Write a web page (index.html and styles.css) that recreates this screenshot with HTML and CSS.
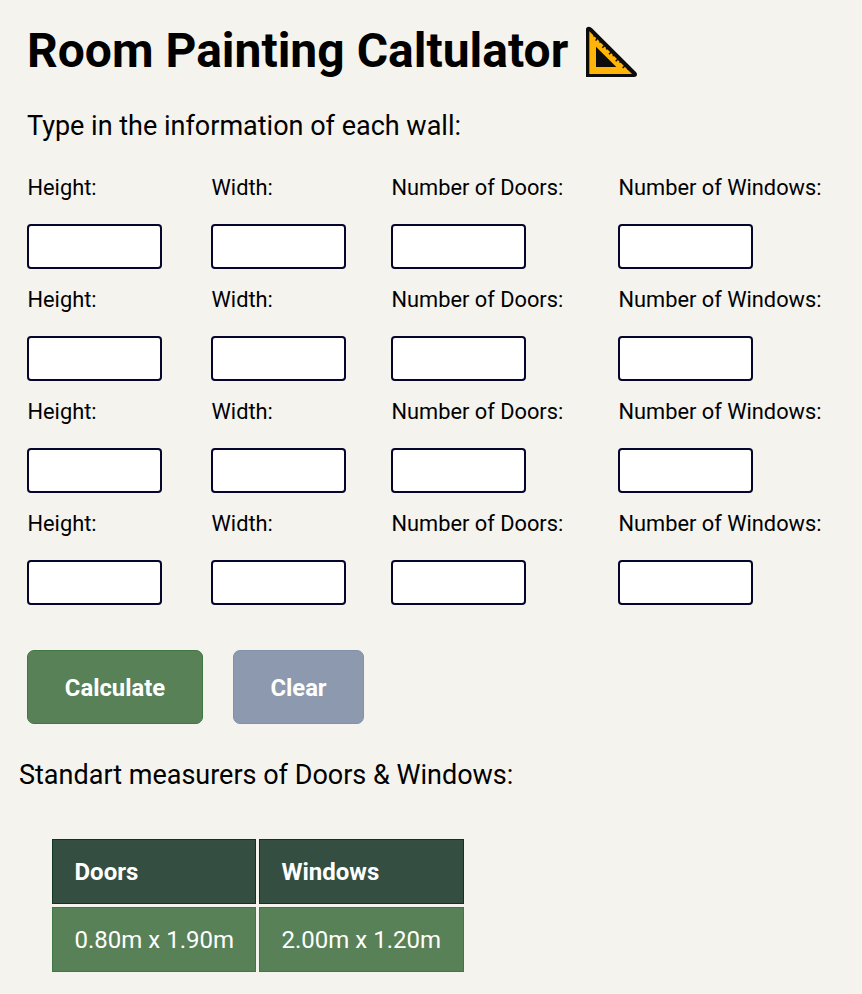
FILE: index.html
```html
<!DOCTYPE html>
<html lang="en">
<head>
<meta charset="utf-8">
<title>Room Painting Caltulator</title>
<link rel="stylesheet" href="styles.css">
</head>
<body>
<h1>Room Painting Caltulator
<svg class="ruler" viewBox="48 33 153 153" aria-hidden="true"><path d="M48 186V43Q48 35 57 35Q62 35 66 40L197 170Q201 174 201 178Q201 186 192 186Z" fill="#0c0c0c"/><path d="M58 49V177H186Z" fill="#ffb407"/><path d="M78 95V156H139Z" fill="#0c0c0c"/><path d="M76 62L70 63M83 68L77 77M94 80L88 82M105 90L97 98M114 100L108 102M125 110L117 118M134 120L128 122M145 131L137 139M154 140L148 142M166 151L158 159M176 161L171 162" fill="none" stroke="#0c0c0c" stroke-width="4.500"/></svg></h1>
<p class="intro">Type in the information of each wall:</p>
<form>
<div class="walls">
<label>Height:<input type="text"></label><label>Width:<input type="text"></label><label>Number of Doors:<input type="text"></label><label>Number of Windows:<input type="text"></label>
<label>Height:<input type="text"></label><label>Width:<input type="text"></label><label>Number of Doors:<input type="text"></label><label>Number of Windows:<input type="text"></label>
<label>Height:<input type="text"></label><label>Width:<input type="text"></label><label>Number of Doors:<input type="text"></label><label>Number of Windows:<input type="text"></label>
<label>Height:<input type="text"></label><label>Width:<input type="text"></label><label>Number of Doors:<input type="text"></label><label>Number of Windows:<input type="text"></label>
</div>
<div class="actions"><button type="button" class="calculate">Calculate</button><button type="button" class="clear">Clear</button></div>
</form>
<p class="standard">Standart measurers of Doors &amp; Windows:</p>
<table>
<colgroup><col class="doors"><col></colgroup>
<tr><th>Doors</th><th>Windows</th></tr>
<tr><td>0.80m x 1.90m</td><td>2.00m x 1.20m</td></tr>
</table>
</body>
</html>
```
FILE: styles.css
```css
* { box-sizing: border-box; }
body { margin: 0; padding: 21px 0 0 27px; height: 994px; overflow: hidden; background: #f5f3ee; color: #000; font-family: Roboto, sans-serif; }
h1 { display: flex; align-items: center; gap: 18px; margin: 0; height: 60px; font-size: 48px; line-height: 60px; font-weight: 700; white-space: nowrap; }
.ruler { width: 51px; height: 51px; margin-top: 1px; }
p { margin: 0; font-size: 27px; line-height: 36px; white-space: nowrap; }
.intro { margin-top: 27px; }
.walls { display: grid; grid-template-columns: 184px 180px 227px 227px; grid-auto-rows: 112px; margin-top: 29px; }
label { font-size: 21.8px; line-height: 30px; white-space: nowrap; text-indent: 0.5px; }
input { display: block; width: 135px; height: 45px; margin-top: 21px; border: 2px solid #06052c; border-radius: 4px; background: #fff; font: inherit; }
.actions { display: flex; gap: 30px; margin-top: 29px; }
button { height: 74px; padding: 2px 0 0; border-radius: 7px; color: #fff; font: 700 23.8px Roboto, sans-serif; }
.calculate { width: 176px; border: 1px solid #3f7843; background: #588157; }
.clear { width: 131px; border: 1px solid #8392ac; background: #8d99ae; }
.standard { margin: 33px 0 0 -8px; }
table { margin: 43px 0 0 22px; border-spacing: 3px; table-layout: fixed; width: 418px; color: #fff; font-size: 24px; }
.doors { width: 204px; }
th, td { height: 65px; padding: 0 21.5px; text-align: left; border: 1px solid #3f7843; background: #588157; white-space: nowrap; }
th { border-color: #0c3523; background: #344e41; }
```
